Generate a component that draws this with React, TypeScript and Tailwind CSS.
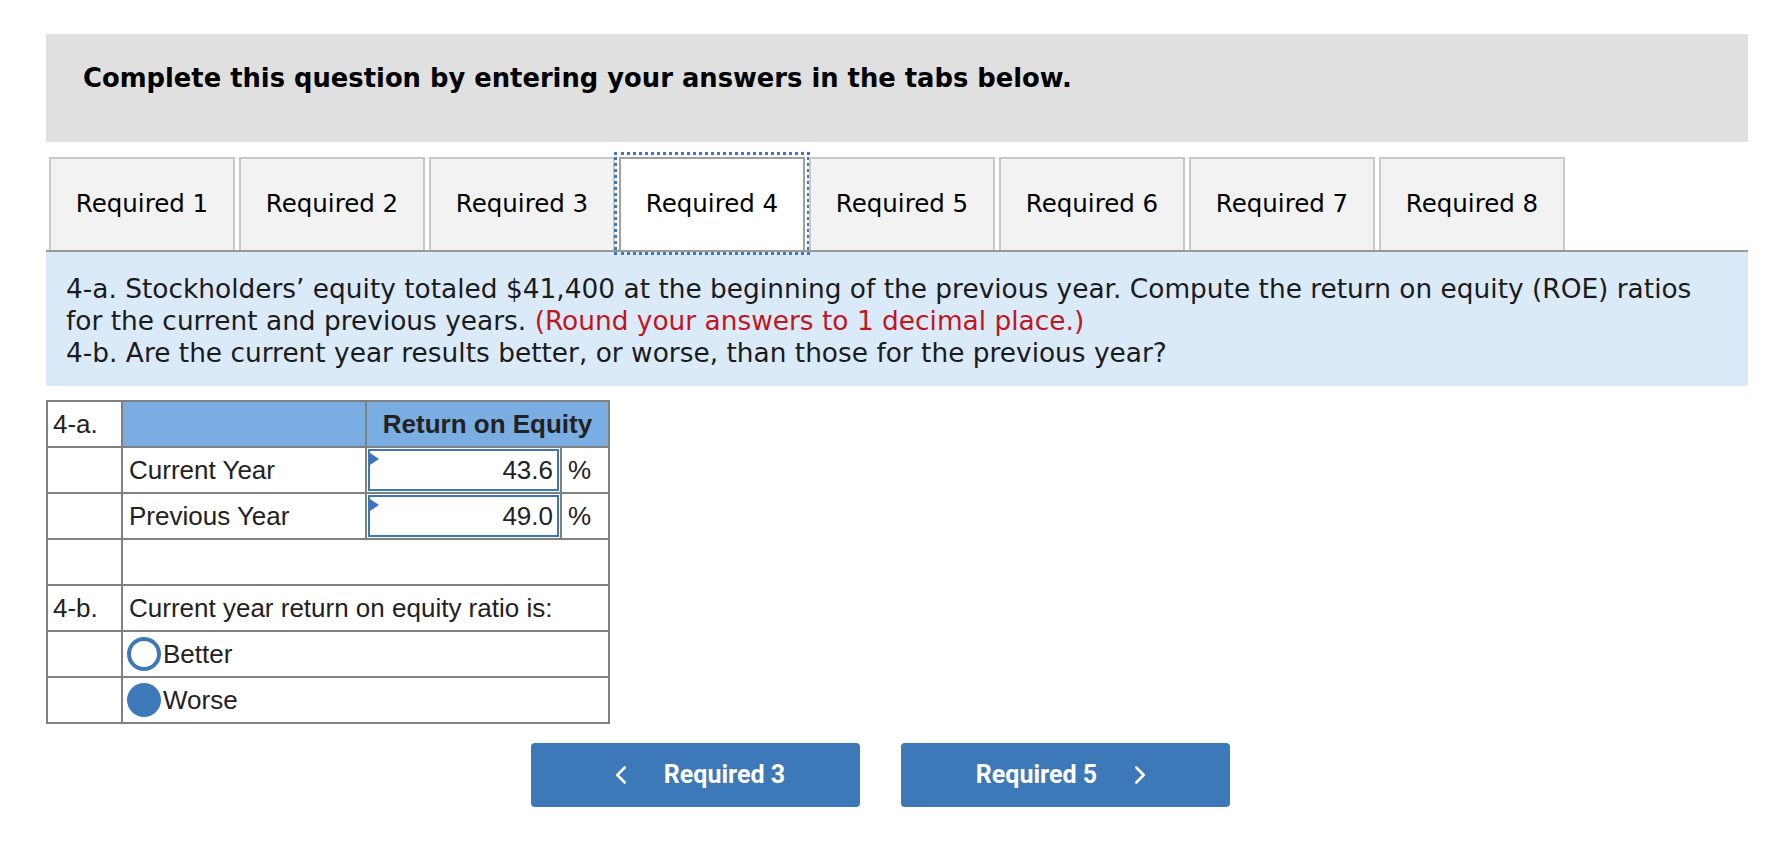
import { ChevronLeft, ChevronRight } from 'lucide-react'

const tabs = ['Required 1', 'Required 2', 'Required 3', 'Required 4', 'Required 5', 'Required 6', 'Required 7', 'Required 8']

function Tab({ label, active }: { label: string; active: boolean }) {
  if (active) {
    return (
      <div className="h-[93px] w-[186px] border-2 border-b-0 border-[#a0a0a0] bg-white flex items-center justify-center outline-[3px] outline-dotted outline-[#3e78bd] outline-offset-[2px]">
        {label}
      </div>
    )
  }
  return (
    <div className="h-[93px] w-[186px] border-2 border-b-0 border-[#c8c8c8] bg-[#f2f2f2] flex items-center justify-center">
      {label}
    </div>
  )
}

function AmountInput({ value }: { value: string }) {
  return (
    <div className="relative h-[42px] border-2 border-[#3d77b8] bg-white flex items-center justify-end pr-[4px]">
      <span className="absolute left-0 top-[2px] w-0 h-0 border-y-[6px] border-y-transparent border-l-[9px] border-l-[#3d77b8]" />
      {value}
    </div>
  )
}

function Radio({ checked }: { checked: boolean }) {
  return checked ? (
    <span className="inline-block w-[34px] h-[34px] rounded-full bg-[#3d78b9]" />
  ) : (
    <span className="inline-block w-[34px] h-[34px] rounded-full border-[4px] border-[#3d78b9] bg-white" />
  )
}

export default function App() {
  const td = 'border-2 border-[#808080] h-[46px] p-0'
  return (
    <div className="w-full h-[850px] bg-white pt-[34px] pl-[46px] pr-[26px] text-[#1b1b1b]">
      <div className="h-[108px] bg-[#e0e0e0] pl-[37px] pt-[25px]">
        <h2 className="font-['DejaVu_Sans',sans-serif] font-bold text-[25.8px] leading-[39px] text-black">
          Complete this question by entering your answers in the tabs below.
        </h2>
      </div>

      <div className="mt-[15px] pl-[3px] flex gap-[4px] font-['DejaVu_Sans',sans-serif] text-[24.5px] text-black">
        {tabs.map((t) => (
          <Tab key={t} label={t} active={t === 'Required 4'} />
        ))}
      </div>
      <div className="h-[2px] bg-[#999999]" />

      <div className="bg-[#dbeaf8] pl-[20px] pt-[21px] pb-[17px] font-['DejaVu_Sans',sans-serif] text-[26.4px] leading-[32px] text-[#1b1b1b]">
        <p>
          4-a. Stockholders’ equity totaled $41,400 at the beginning of the previous year. Compute the return on equity (ROE) ratios
          <br />
          for the current and previous years. <span className="text-[#c0161e]">(Round your answers to 1 decimal place.)</span>
        </p>
        <p>4-b. Are the current year results better, or worse, than those for the previous year?</p>
      </div>

      <table className="mt-[14px] border-collapse border-2 border-[#808080] font-['Liberation_Sans',Arial,sans-serif] text-[26px] text-[#222]">
        <colgroup>
          <col className="w-[75px]" />
          <col className="w-[244px]" />
          <col className="w-[195px]" />
          <col className="w-[48px]" />
        </colgroup>
        <tbody>
          <tr>
            <td className={`${td} pl-[5px]`}>4-a.</td>
            <td className={`${td} bg-[#7aade2]`} />
            <td colSpan={2} className={`${td} bg-[#7aade2] text-center font-bold`}>
              Return on Equity
            </td>
          </tr>
          <tr>
            <td className={td} />
            <td className={`${td} pl-[6px]`}>Current Year</td>
            <td className={`${td} px-[1px]`}>
              <AmountInput value="43.6" />
            </td>
            <td className={`${td} pl-[6px]`}>%</td>
          </tr>
          <tr>
            <td className={td} />
            <td className={`${td} pl-[6px]`}>Previous Year</td>
            <td className={`${td} px-[1px]`}>
              <AmountInput value="49.0" />
            </td>
            <td className={`${td} pl-[6px]`}>%</td>
          </tr>
          <tr>
            <td className={td} />
            <td colSpan={3} className={td} />
          </tr>
          <tr>
            <td className={`${td} pl-[5px]`}>4-b.</td>
            <td colSpan={3} className={`${td} pl-[6px]`}>Current year return on equity ratio is:</td>
          </tr>
          <tr>
            <td className={td} />
            <td colSpan={3} className={`${td} pl-[4px]`}>
              <div className="flex items-center gap-[2px]">
                <Radio checked={false} />
                Better
              </div>
            </td>
          </tr>
          <tr>
            <td className={td} />
            <td colSpan={3} className={`${td} pl-[4px]`}>
              <div className="flex items-center gap-[2px]">
                <Radio checked={true} />
                Worse
              </div>
            </td>
          </tr>
        </tbody>
      </table>

      <div className="mt-[19px] pl-[485px] flex gap-[41px] font-['Roboto',sans-serif] font-bold text-[25px] text-white">
        <button className="w-[329px] h-[64px] rounded-[4px] bg-[#3d78b8] flex items-center justify-center gap-[28px]">
          <ChevronLeft size={30} strokeWidth={2} />
          <span>Required 3</span>
        </button>
        <button className="w-[329px] h-[64px] rounded-[4px] bg-[#3d78b8] flex items-center justify-center gap-[28px]">
          <span>Required 5</span>
          <ChevronRight size={30} strokeWidth={2} />
        </button>
      </div>
    </div>
  )
}
